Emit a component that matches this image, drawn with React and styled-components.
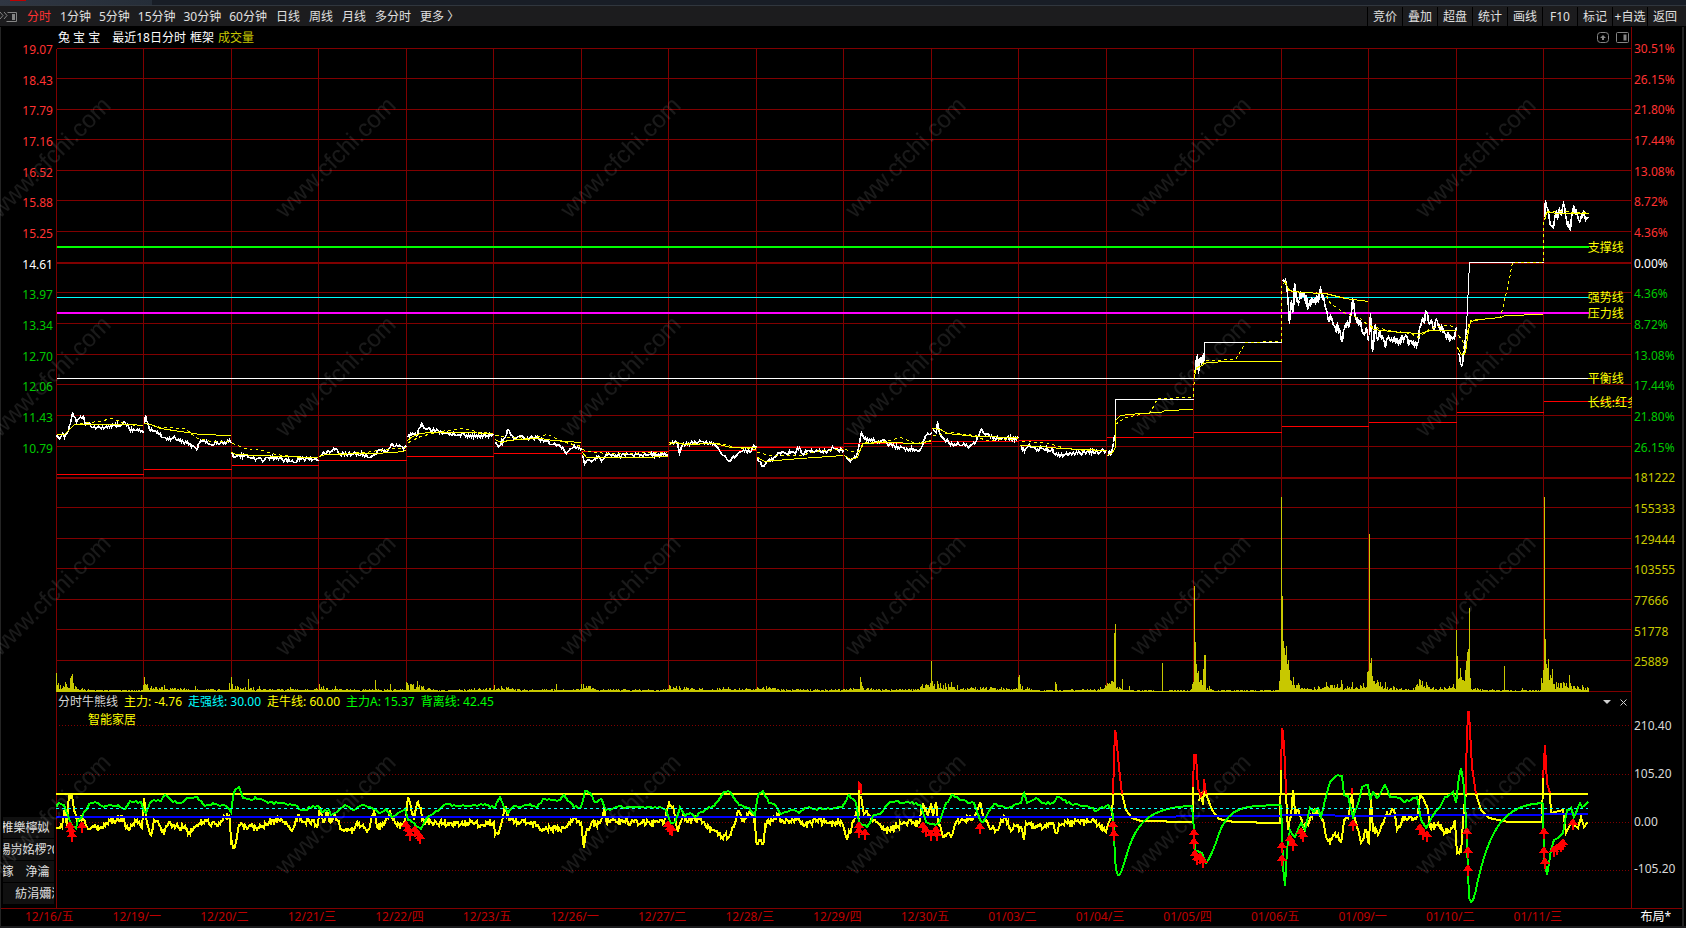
import React from 'react'
import styled, { createGlobalStyle } from 'styled-components'

const periods = ['1分钟', '5分钟', '15分钟', '30分钟', '60分钟']
const longPeriods = ['日线', '周线', '月线', '多分时']
const tools = ['竞价', '叠加', '超盘', '统计', '画线', 'F10', '标记', '+自选', '返回']

const prices = ['19.07', '18.43', '17.79', '17.16', '16.52', '15.88', '15.25', '14.61', '13.97', '13.34', '12.70', '12.06', '11.43', '10.79']
const percents = ['30.51%', '26.15%', '21.80%', '17.44%', '13.08%', '8.72%', '4.36%', '0.00%', '4.36%', '8.72%', '13.08%', '17.44%', '21.80%', '26.15%']
const volumes = ['181222', '155333', '129444', '103555', '77666', '51778', '25889']
const levels = ['210.40', '105.20', '0.00', '-105.20']
const days = ['12/16/五', '12/19/一', '12/20/二', '12/21/三', '12/22/四', '12/23/五', '12/26/一', '12/27/二', '12/28/三', '12/29/四', '12/30/五', '01/03/二', '01/04/三', '01/05/四', '01/06/五', '01/09/一', '01/10/二', '01/11/三']
const sideRows = ['椎樂檸姒  ', '楊岃姳椤?0', '鎵　浄瀹  ', ' ! 　紡涓嬭浇']

const legend = [
  ['分时牛熊线', '#d8d8d8'],
  ['主力: -4.76', '#ffff00'],
  ['走强线: 30.00', '#00ffff'],
  ['走牛线: 60.00', '#ffff00'],
  ['主力A: 15.37', '#00ff00'],
  ['背离线: 42.45', '#00ff00'],
]

const lineLabels = [
  ['支撑线', 30.9],
  ['强势线', 38.7],
  ['压力线', 41.1],
  ['平衡线', 51.2],
  ['长线:红多', 55],
]

const gridX = [56, 143, 231, 318, 406, 493, 581, 668, 756, 843, 931, 1018, 1106, 1193, 1281, 1368, 1456, 1543]
const gridY = [48, 78, 109, 139, 170, 200, 231, 292, 323, 354, 384, 415, 446, 507, 538, 568, 599, 629, 660]

// one line per trading day: x,y pairs in chart units
const priceDays = [
  '56,435 59,438 62,433 64,437 68,430 70,423 72,412 74,416 76,422 79,418 83,415 84,421 87,423 94,426 98,426 104,427 114,425 121,424 124,421 127,424 129,429 134,430 141,430 143,433',
  '144,423 145,415 147,422 150,430 157,431 162,437 166,439 175,438 183,442 189,443 196,449 198,443 203,440 207,443 216,443 223,443 229,439 231,442',
  '231,452 234,457 239,455 246,454 250,457 261,459 271,457 282,459 291,461 296,462 300,457 307,458 316,459 318,460',
  '319,455 323,452 330,451 336,448 339,453 346,454 357,453 371,456 379,449 387,451 391,443 395,446 406,447',
  '407,437 410,433 416,435 419,427 421,423 425,428 434,430 445,433 454,434 464,434 475,436 486,435 493,435',
  '495,442 499,445 504,438 507,429 511,435 516,438 521,435 525,439 536,437 543,441 554,443 560,446 565,452 572,448 577,446 581,448',
  '582,455 584,464 588,459 592,460 597,457 602,459 606,453 617,455 640,454 667,454',
  '669,443 677,443 679,453 682,445 694,441 704,443 713,443 717,447 722,455 729,461 735,456 740,451 751,450 754,446 756,446',
  '757,458 763,466 769,459 774,457 777,453 794,452 799,447 802,453 806,451 822,451 833,448 843,450',
  '845,457 850,461 856,455 859,443 861,432 863,437 872,440 885,441 892,446 904,448 919,450 922,445 925,435 931,432',
  '933,429 936,432 937,421 939,432 944,439 953,445 963,443 969,446 976,440 980,430 986,433 993,438 1018,438',
  '1020,445 1024,451 1028,445 1035,448 1051,449 1057,455 1072,453 1086,452 1105,451',
]
const livelyDays = [
  '1107,455 1111,451 1113,442 1115,438',
  '1195,370 1197,355 1198,373 1200,357 1203,363 1204,350',
  '1282,281 1285,279 1287,293 1289,323 1291,300 1293,310 1294,283 1296,300 1302,292 1308,305 1314,298 1318,302 1320,288 1324,302 1327,315 1333,325 1339,328 1341,341 1345,323 1349,325 1352,299 1355,317 1359,320 1363,333 1366,327 1368,341',
  '1369,335 1370,313 1372,351 1374,327 1378,338 1379,330 1385,347 1388,336 1395,343 1399,339 1413,340 1416,346 1420,326 1427,313 1430,322 1439,325 1445,333 1452,338 1456,327',
  '1458,353 1461,365 1464,350 1466,327',
  '1544,217 1545,200 1547,208 1549,220 1552,226 1555,213 1560,213 1563,203 1565,215 1569,228 1572,213 1574,207 1577,215 1580,220 1583,210 1585,220 1588,217',
]
const limitUp = [
  '1115,438 1115,399 1193,399',
  '1204,350 1204,342 1281,342',
  '1466,327 1469,262 1543,262',
]
const averages = [
  '56,434 64,434 70,428 74,424 130,424 143,425',
  '144,423 150,424 160,428 180,431 200,434 231,435',
  '231,452 236,454 280,456 318,457',
  '319,456 325,454 370,453 395,452 406,450',
  '407,440 412,436 420,433 430,432 460,432 493,433',
  '495,439 500,442 508,440 520,439 540,438 552,440 581,442',
  '582,452 586,457 600,457 640,457 668,456',
  '669,444 676,442 684,444 715,443 730,447 756,447',
  '757,457 764,461 775,460 800,458 843,455',
  '844,455 850,459 857,457 862,443 885,442 919,443 931,440',
  '932,428 940,429 947,433 975,436 1018,437',
  '1020,445 1040,446 1060,448 1106,450',
  '1107,455 1112,452 1115,447 1115,420 1120,415 1140,413 1160,412 1165,410 1193,409',
  '1194,376 1196,367 1200,366 1206,362 1230,361 1281,361',
  '1282,284 1285,281 1288,290 1300,292 1325,293 1345,298 1368,301',
  '1370,325 1373,329 1400,332 1420,333 1430,330 1456,330',
  '1457,347 1461,354 1465,352 1468,330 1470,321 1480,319 1500,317 1505,315 1543,314',
  '1544,220 1546,212 1560,213 1588,213',
]
const dashes = [
  '74,424 98,421 112,418 124,423 135,425',
  '146,423 160,427 185,428 195,437 210,441 231,441',
  '232,443 245,448 262,450 275,454 300,457 318,457',
  '320,455 340,453 365,452 385,449 406,447',
  '408,442 420,436 440,431 462,428 480,432 493,433',
  '495,435 510,437 530,438 547,434 565,442 581,446',
  '582,449 592,452 610,453 667,452',
  '669,442 690,443 720,443 735,447 756,449',
  '757,452 770,455 800,455 820,450 843,449',
  '845,449 856,452 865,442 885,441 900,437 915,443 931,441',
  '933,435 950,432 975,435 985,440 1010,439 1018,438',
  '1022,441 1045,442 1065,448 1085,450 1106,450',
  '1115,424 1125,417 1150,412 1157,398 1193,397 1194,370 1206,360 1235,359 1245,342 1281,341 1281,285',
  '1285,282 1290,291 1325,293 1330,303 1345,313 1360,318 1368,325',
  '1370,326 1390,330 1410,333 1418,337 1430,328 1445,325 1456,326',
  '1458,335 1463,342 1464,354 1468,325 1470,320 1500,317 1508,283 1512,262 1543,262 1543,218',
  '1547,211 1588,212',
]
const longLine = [474, 469, 465, 460, 456, 453, 451, 450, 447, 443, 441, 440, 437, 432, 426, 422, 412, 401]

// x,top of the volume bars that rise over the noise
const spikes = '56,672 57,684 60,684 65,681 66,683 70,677 71,675 72,673 73,682 76,686 144,676 145,683 146,684 148,687 151,686 164,684 195,685 229,682 231,676 232,683 235,685 248,678 253,686 259,685 290,686 319,683 323,685 335,685 375,679 390,683 406,681 407,682 408,684 411,684 413,685 417,680 419,684 421,685 494,684 501,685 556,683 581,683 583,683 588,685 669,684 673,686 860,676 861,681 862,685 925,684 927,685 930,682 931,660 932,680 934,683 937,680 943,684 951,681 1018,676 1019,674 1020,683 1022,685 1055,681 1056,683 1109,686 1112,682 1113,681 1114,632 1115,623 1122,678 1129,685 1162,662 1194,585 1195,641 1196,663 1197,672 1198,676 1199,681 1200,679 1202,684 1203,668 1204,654 1205,654 1209,685 1281,496 1282,595 1283,640 1284,673 1285,669 1286,645 1287,663 1288,659 1289,669 1290,680 1292,684 1293,676 1294,684 1326,681 1332,684 1334,684 1341,679 1342,683 1352,681 1367,671 1369,533 1370,662 1371,657 1372,675 1373,680 1374,680 1375,683 1376,682 1385,681 1416,684 1419,678 1420,679 1422,680 1426,681 1456,629 1457,655 1458,678 1459,677 1460,667 1461,676 1462,679 1463,680 1465,672 1466,667 1467,651 1468,648 1469,607 1470,684 1504,665 1522,687 1544,496 1545,638 1546,663 1547,667 1548,658 1549,679 1550,680 1551,677 1552,668 1553,683 1556,681 1558,684 1560,682 1563,684 1566,682 1569,674 1570,682 1582,684 1587,686'

// x,height of the volume noise
const volumeFloor = '56,8 60,6 75,5 85,2 140,1 145,8 155,4 200,2 230,2 235,5 260,2 310,2 325,4 350,2 405,2 412,10 425,4 440,1 490,3 505,4 520,2 575,2 585,7 595,2 660,2 675,6 690,3 715,2 725,5 735,2 750,5 765,5 780,2 840,2 858,5 875,2 915,2 923,7 950,8 965,4 1000,4 1012,2 1017,5 1025,4 1040,1 1095,2 1112,10 1120,3 1135,1 1190,1 1196,24 1206,6 1212,1 1278,1 1283,50 1289,25 1295,9 1310,3 1320,5 1335,7 1345,6 1355,4 1365,8 1369,30 1375,14 1385,6 1400,3 1412,2 1418,12 1425,7 1435,3 1450,5 1455,10 1462,15 1469,45 1471,4 1480,2 1500,1 1540,1 1544,50 1550,15 1556,8 1570,8 1580,4 1588,5'

const strongYellow = [
  '56,828 62,827 65,807 67,827 69,795 72,796 74,810 77,822 81,815 87,827 95,825 102,828 107,823 123,817 125,825 129,830 136,822 142,828 144,798 146,817 149,830 151,835 154,820 159,825 162,833 165,830 169,822 173,825 184,828 189,832 195,827 200,824 205,820 210,825 219,823 227,815 230,820 231,843 234,848 237,837 239,825 246,827 253,826 259,828 266,825 275,820 286,822 291,830 299,815 302,822 309,820 318,825 320,807 323,822 327,812 330,822 335,812 336,820 343,830 354,830 357,822 368,830 374,812 377,827 384,825 390,810 393,820 400,827 406,817 408,797 411,807 414,820 417,803 421,808 422,820 429,823 443,823 461,824 471,822 482,825 494,822 495,835 499,833 502,820 505,807 509,820 521,822 532,823 541,830 550,828 560,830 565,828 576,818 581,823 584,848 586,833 589,830 592,822 596,825 600,823 604,810 606,820 614,820 631,822 664,823 669,803 674,810 678,832 683,815 687,822 696,817 703,822 712,830 722,837 730,835 735,822 739,811 742,822 751,813 755,820 756,842 764,842 765,825 778,815 781,822 796,820 805,825 817,820 828,823 842,823 846,837 850,833 856,813 859,820 859,790',
  '861,796 863,810 868,815 871,820 881,827 889,830 903,823 914,823 919,823 923,803 928,815 931,803 933,817 936,802 938,822 944,837 953,833 956,822 963,820 974,817 980,803 984,817 989,827 996,830 1005,817 1010,828 1021,827 1024,840 1026,823 1035,828 1053,823 1056,833 1060,825 1071,822 1092,820 1106,832 1112,817 1113,794',
  '1122,794 1126,810 1132,818 1141,821 1193,822 1193,787',
  '1199,801 1201,792 1203,805 1204,790',
  '1206,794 1212,810 1219,819 1234,822 1280,823 1281,770',
  '1286,794 1288,830 1291,817 1293,790 1295,813 1298,810 1303,827 1309,822 1314,810 1318,813 1323,820 1326,837 1330,843 1335,833 1341,843 1344,820 1348,818 1352,794 1355,820 1361,843 1366,830 1369,843 1371,797 1373,830 1379,833 1385,817 1394,810 1397,830 1405,817 1417,817 1420,795 1424,800 1428,810 1430,827 1438,823 1445,833 1452,828 1455,820 1457,853 1461,853 1464,810 1466,794',
]
const calmYellow = ['1476,794 1481,810 1489,818 1508,822 1542,822 1543,778', '1550,794 1551,813 1563,810 1566,833 1571,823 1578,828 1581,817 1584,827 1587,823 1588,823']
const redPeaks = [
  '859,790 859,783 861,785 861,794',
  '1113,794 1115,730 1116,734 1119,767 1122,794',
  '1193,787 1194,755 1196,755 1198,788 1201,796 1204,790 1204,779 1206,794',
  '1281,770 1282,728 1283,732 1285,763 1286,794',
  '1352,794 1352,788',
  '1466,794 1466,767 1468,712 1469,712 1472,767 1476,794',
  '1543,778 1545,745 1547,783 1550,793',
]
const green = [
  '56,807 59,803 64,805 67,813 70,822 73,827 76,828 78,820 82,817 89,804 98,803 105,806 118,805 125,809 130,801 141,802 144,811 146,813 150,803 154,800 161,801 165,795 171,800 179,803 189,798 197,797 205,806 214,804 227,807 231,812 234,792 236,789 239,787 243,798 252,800 255,797 268,803 280,803 295,805 301,810 318,806 323,812 329,810 331,815 337,812 345,805 354,810 362,805 373,809 380,813 386,809 392,817 405,809 408,820 414,823 421,829 427,818 434,813 446,804 461,806 486,805 495,807 500,797 504,807 508,813 514,806 521,807 530,804 537,807 543,799 560,800 564,795 574,807 581,807 585,791 590,793 595,802 602,800 606,810 617,807 660,807 666,810 671,823 675,822 680,807 685,816 690,813 695,817 701,812 714,806 724,792 730,792 739,805 746,807 749,808 755,815 758,795 763,791 769,803 774,804 781,814 792,810 799,813 805,808 822,809 842,807 849,795 856,803 859,822 867,827 874,815 881,813 890,802 912,802 921,806 926,822 935,825 939,823 946,803 953,795 960,800 974,803 980,820 983,822 987,815 994,804 1008,808 1021,803 1024,793 1027,803 1036,798 1042,803 1053,803 1057,797 1071,804 1089,807 1096,811 1108,805 1113,813',
  '1281,805 1282,830 1283,867 1285,886 1287,850 1290,830 1295,837 1301,823 1305,830 1310,808 1314,812 1318,808 1321,817 1326,797 1330,782 1336,776 1342,776 1344,795 1348,796 1353,817 1357,807 1362,787 1368,785 1370,800 1373,792 1377,798 1385,785 1390,797 1400,798 1405,802 1417,797 1421,820 1426,828 1432,817 1440,807 1445,797 1453,792 1456,803 1459,777 1461,768 1464,787 1466,820 1469,897',
  '1543,803 1544,857 1547,875 1551,850 1554,840 1563,833 1567,810 1571,808 1574,817 1580,803 1582,807 1588,802',
]
const greenCurves = [
  'M1113,813 L1115,857 Q1116,876 1119,875 Q1121,874 1126,857 C1135,827 1145,807 1192,806 L1194,830 1195,850 1202,853 1206,863 Q1211,858 1220,831 C1230,806 1245,806 1281,805',
  'M1469,897 Q1472,912 1478,880 C1490,828 1505,804 1543,803',
]
const arrows = '70,821 71,825 72,830 82,821 406,820 408,824 410,829 415,825 418,829 420,832 668,820 670,823 672,824 859,821 859,826 865,828 923,821 926,825 931,829 936,825 937,829 980,822 1113,820 1114,829 1194,828 1194,837 1195,849 1197,853 1200,852 1203,856 1282,841 1282,854 1290,834 1293,839 1301,827 1303,830 1353,819 1420,823 1423,828 1427,830 1467,827 1468,846 1468,864 1544,827 1544,846 1545,857 1554,845 1557,843 1561,840 1563,838 1573,818'

const parse = text => text.split(' ').map(pair => pair.split(',').map(Number))

const random = seed => {
  let s = seed * 7919 + 17
  return () => {
    s = (s * 16807) % 2147483647
    return s / 2147483647
  }
}

const heightAt = (points, x) => {
  const i = points.findIndex(p => p[0] >= x)
  if (i <= 0) return points[i === 0 ? 0 : points.length - 1][1]
  const [x0, y0] = points[i - 1]
  const [x1, y1] = points[i]
  return x1 === x0 ? y1 : y0 + ((y1 - y0) * (x - x0)) / (x1 - x0)
}

// joins the points and adds a little jitter on every step between them
const jagged = (text, amount, step = 1) => {
  const points = parse(text)
  const next = random(points[0][0])
  const out = []
  points.forEach(([x, y], i) => {
    out.push(`${x},${y}`)
    const after = points[i + 1]
    if (!after) return
    for (let px = x + step; px < after[0]; px += step) {
      out.push(`${px},${Math.round(heightAt(points, px) + (next() - 0.5) * 2 * amount)}`)
    }
  })
  return out.join(' ')
}

const volumePath = () => {
  const floor = parse(volumeFloor)
  const next = random(5)
  let d = ''
  for (let x = 56; x < 1589; x += 1) {
    const h = Math.round(heightAt(floor, x) * (0.35 + next() * 0.75) * (next() > 0.4 ? 1 : 0.5))
    d += `M${x},691V${690 - h}`
  }
  parse(spikes).forEach(([x, y]) => {
    d += `M${x},691V${y}`
  })
  return d
}

const PriceChart = () => (
  <Plot viewBox="56 48 1576 644" preserveAspectRatio="none" role="img" aria-label="最近18日分时">
    <g transform="translate(0.5 0.5)" fill="none" shapeRendering="crispEdges">
      <g stroke="#800000">
        {gridX.map(x => <path key={x} d={`M${x},48V691`} />)}
        {gridY.map(y => <path key={y} d={`M56,${y}H1632`} />)}
        <path d="M56,691H1632M1631,48V692" />
        <path d="M56,262.5H1632M56,477.5H1632" strokeWidth="2" />
      </g>
      <path d={volumePath()} stroke="#c8c800" />
      <path d="M56,246.5H1588" stroke="#00ff00" strokeWidth="2" />
      <path d="M56,297H1588" stroke="#00ffff" />
      <path d="M56,312.5H1588" stroke="#ff00ff" strokeWidth="2" />
      <path d="M56,378H1588" stroke="#ffffff" />
      <g stroke="#ff0000">
        {longLine.map((y, i) => <path key={i} d={`M${gridX[i]},${y}H${gridX[i + 1] || 1632}`} />)}
      </g>
      <g stroke="#ffffff">
        <g strokeWidth="1.6">
          {priceDays.map(d => <polyline key={d} points={jagged(d, 2)} />)}
          {livelyDays.map(d => <polyline key={d} points={jagged(d, 6)} />)}
        </g>
        {limitUp.map(d => <polyline key={d} points={d} />)}
      </g>
      <g stroke="#ffff00">
        {averages.map(d => <polyline key={d} points={d} />)}
        {dashes.map(d => <polyline key={d} points={d} strokeDasharray="3 3" />)}
      </g>
    </g>
  </Plot>
)

const BullBearChart = () => (
  <Plot viewBox="56 692 1576 216" preserveAspectRatio="none" role="img" aria-label="分时牛熊线">
    <g fill="none" shapeRendering="crispEdges">
      <path d="M59,725.5H1631M59,774.5H1631M59,822.5H1631M59,870.5H1631" stroke="#800000" strokeDasharray="1 2" />
      <path d="M56.5,692V908M1631.5,692V908" stroke="#800000" />
      <g strokeWidth="2">
        <path d="M56,794H1588" stroke="#ffff00" />
        <g stroke="#ffff00">
          {strongYellow.map(d => <polyline key={d} points={jagged(d, d.length > 90 ? 3 : 0)} />)}
          {calmYellow.map(d => <polyline key={d} points={d} />)}
        </g>
        <g stroke="#ff0000">
          {redPeaks.map(d => <polyline key={d} points={d} />)}
        </g>
        <path d="M56,817H1160L1193,816H1281V815H1330L1340,816H1368L1420,815H1543V814H1588" stroke="#0000ff" />
        <g stroke="#00ff00">
          {green.map(d => <polyline key={d} points={jagged(d, 1, 2)} />)}
          {greenCurves.map(d => <path key={d} d={d} />)}
        </g>
      </g>
      <path d="M56,808.5H1588" stroke="#00ffff" strokeDasharray="3 3" />
      {parse(arrows).map(([x, y]) => (
        <path key={`${x}-${y}`} d={`M${x},${y}l5,7h-4v5h-2v-5h-4z`} fill="#ff0000" />
      ))}
    </g>
  </Plot>
)

const PanelIcon = () => (
  <svg width="13" height="13" viewBox="0 0 13 13" fill="none" stroke="#858585" aria-hidden="true">
    <rect x="0.5" y="1.5" width="12" height="10" rx="1" />
    <path d="M9 3.5v6" strokeWidth="3" />
  </svg>
)

const App = () => (
  <>
    <GlobalStyle />
    <Screen>
      <TitleStrip><TitleMark /></TitleStrip>
      <Toolbar>
        <SideToggle aria-label="侧栏">
          <svg width="18" height="14" viewBox="0 0 18 14" fill="none" stroke="#858585" aria-hidden="true">
            <path d="M7.5 2.5h9v9h-10" />
            <path d="M13.5 4v6" strokeWidth="3" />
            <path d="M0 2l3 3.500-3 3.500M4 2l3 3.500-3 3.500" />
          </svg>
        </SideToggle>
        <Period $active>分时</Period>
        <Minutes>
          {periods.map(p => <Period key={p}>{p}</Period>)}
        </Minutes>
        {longPeriods.map(p => <Period key={p}>{p}</Period>)}
        <More>更多 〉</More>
        <Tools>
          {tools.map(t => <Tool key={t}>{t}</Tool>)}
        </Tools>
      </Toolbar>

      <Board>
        <Axis $left $top={14} $bottom={7}>
          {prices.map((p, i) => (
            <Tick key={p} $color={i < 7 ? '#ff3232' : i === 7 ? '#ffffff' : '#00c800'}>{p}</Tick>
          ))}
          {volumes.map(v => <Tick key={v} />)}
        </Axis>
        <MainPanel>
          <PanelHead>
            <Name>兔 宝 宝</Name>
            <span>最近18日分时</span>
            <span>框架</span>
            <VolumeName>成交量</VolumeName>
            <HeadIcons>
              <IconButton aria-label="展开">
                <svg width="13" height="13" viewBox="0 0 13 13" fill="none" stroke="#858585" aria-hidden="true">
                  <rect x="0.5" y="1.500" width="11" height="10" rx="3" />
                  <path d="M6 4L3 7h6zM5 7h2v2H5z" fill="#858585" stroke="none" />
                </svg>
              </IconButton>
              <IconButton aria-label="面板"><PanelIcon /></IconButton>
            </HeadIcons>
          </PanelHead>
          <PlotArea>
            <PriceChart />
            {lineLabels.map(([text, top]) => <LineLabel key={text} $top={top}>{text}</LineLabel>)}
          </PlotArea>
        </MainPanel>
        <Axis $top={13} $bottom={8}>
          {percents.map((p, i) => (
            <Tick key={i} $color={i < 7 ? '#ff3232' : i === 7 ? '#ffffff' : '#00c800'}>{p}</Tick>
          ))}
          {volumes.map(v => <Tick key={v} $color="#c8c800">{v}</Tick>)}
        </Axis>

        <SideList>
          {sideRows.map(row => <SideRow key={row}>{row}</SideRow>)}
        </SideList>
        <LowerPanel>
          <BullBearChart />
          <Legend>
            <LegendRow>
              {legend.map(([text, color]) => <LegendItem key={text} $color={color}>{text}</LegendItem>)}
              <LegendTools>
                <IconButton aria-label="菜单">
                  <svg width="9" height="9" viewBox="0 0 9 9" aria-hidden="true"><path d="M0 2h8L4 6z" fill="#d0d0d0" /></svg>
                </IconButton>
                <IconButton aria-label="关闭">
                  <svg width="7" height="7" viewBox="0 0 7 7" aria-hidden="true"><path d="M0.500 0.500l6 6m0-6l-6 6" stroke="#d0d0d0" /></svg>
                </IconButton>
              </LegendTools>
            </LegendRow>
            <Sector>智能家居</Sector>
          </Legend>
        </LowerPanel>
        <Axis $top={25} $bottom={0}>
          {levels.map(l => <Tick key={l} $color="#d8d8d8">{l}</Tick>)}
        </Axis>
      </Board>

      <DateBar>
        <Dates>
          {days.map(d => <Day key={d}>{d}</Day>)}
        </Dates>
        <Layout>布局*</Layout>
      </DateBar>
      <FootStrip />
      <Watermark aria-hidden="true">
        <defs>
          <pattern id="mark" x="-22" y="86" width="285" height="219" patternUnits="userSpaceOnUse">
            <text x="22" y="133" transform="rotate(-45 22 133)">www.cfchi.com</text>
          </pattern>
        </defs>
        <rect width="100%" height="100%" fill="url(#mark)" />
      </Watermark>
    </Screen>
  </>
)

export default App

const GlobalStyle = createGlobalStyle`
  body {
    margin: 0;
    background: #000;
    color: #fff;
    font-family: 'Noto Sans', 'Noto Sans CJK SC', sans-serif;
    font-size: 12px;
    line-height: 18px;
  }
  * {
    box-sizing: border-box;
  }
  button {
    padding: 0;
    border: 0;
    background: none;
    color: inherit;
    font: inherit;
    white-space: nowrap;
    cursor: pointer;
  }
`

const Screen = styled.div`
  position: relative;
  display: flex;
  flex-direction: column;
  height: 100vh;
  min-height: 640px;
  overflow: hidden;
`

const TitleStrip = styled.div`
  flex: none;
  height: 6px;
  padding-left: 10px;
  background: linear-gradient(90deg, #303743, #252d38 9%, #181d26 9%);
  border-bottom: 1px solid #30363e;
`

const TitleMark = styled.div`
  width: 16px;
  height: 1px;
  background: #c00000;
`

const Toolbar = styled.nav`
  display: flex;
  flex: none;
  align-items: center;
  gap: 9px;
  height: 21px;
  padding-top: 2px;
  background: #1c1c1e;
  border-bottom: 1px solid #000;
  color: #e0e0e0;
`

const SideToggle = styled.button`
  display: flex;
  width: 18px;
`

const Minutes = styled.div`
  display: flex;
  gap: 8px;
`

const Period = styled.button`
  color: ${props => (props.$active ? '#ff3232' : '#e0e0e0')};
`

const More = styled.button`
  color: #e0e0e0;
`

const Tools = styled.div`
  display: flex;
  margin-left: auto;
  padding-right: 4px;
`

const Tool = styled.button`
  width: 35px;
  height: 20px;
  border-left: 1px solid #000;
`

const Board = styled.main`
  display: grid;
  flex: 1;
  grid-template-columns: 55px minmax(0, 1fr) 50px;
  grid-template-rows: minmax(0, 665fr) minmax(0, 216fr);
  min-height: 0;
  margin-right: 2px;
  border: solid #242424;
  border-width: 0 2px 0 1px;
`

const Axis = styled.div`
  display: flex;
  flex-direction: column;
  min-height: 0;
  padding: ${props => props.$top}px ${props => (props.$left ? 3 : 2)}px ${props => props.$bottom}px;
  text-align: ${props => (props.$left ? 'right' : 'left')};
`

const Tick = styled.span`
  flex: 1;
  min-height: 0;
  color: ${props => props.$color};
`

const MainPanel = styled.section`
  display: flex;
  flex-direction: column;
  min-height: 0;
`

const PanelHead = styled.header`
  display: flex;
  flex: none;
  align-items: center;
  gap: 4px;
  height: 21px;
  padding: 0 2px;
  border-right: 1px solid #800000;
`

const Name = styled.span`
  margin-right: 8px;
`

const VolumeName = styled.span`
  color: #c8c800;
`

const HeadIcons = styled.div`
  display: flex;
  gap: 6px;
  margin-left: auto;
`

const IconButton = styled.button`
  display: flex;
  align-items: center;
`

const PlotArea = styled.div`
  position: relative;
  flex: 1;
  min-height: 0;
  overflow: hidden;
`

const Plot = styled.svg`
  display: block;
  grid-area: 1 / 1;
  width: 100%;
  height: 100%;
  min-height: 0;
`

const LineLabel = styled.span`
  position: absolute;
  left: 97.2%;
  top: ${props => props.$top}%;
  margin-top: -8px;
  color: #ffff00;
  white-space: nowrap;
`

const SideList = styled.div`
  display: flex;
  flex-direction: column;
  justify-content: flex-end;
  gap: 1px;
  min-height: 0;
  padding: 0 2px 4px;
`

const SideRow = styled.div`
  display: flex;
  justify-content: center;
  height: 21px;
  overflow: hidden;
  background: #101010;
  color: #e0e0e0;
  line-height: 21px;
  white-space: pre;
`

const LowerPanel = styled.section`
  display: grid;
  grid-template-rows: minmax(0, 1fr);
  min-height: 0;
`

const Legend = styled.div`
  grid-area: 1 / 1;
  padding: 1px 5px 0 2px;
`

const LegendRow = styled.div`
  display: flex;
  align-items: center;
  gap: 6px;
`

const LegendItem = styled.span`
  color: ${props => props.$color};
`

const LegendTools = styled.div`
  display: flex;
  gap: 8px;
  margin-left: auto;
`

const Sector = styled.div`
  padding-left: 30px;
  color: #ffff00;
`

const DateBar = styled.footer`
  display: flex;
  flex: none;
  height: 18px;
  margin-right: 2px;
  padding-left: 24px;
  border: solid #242424;
  border-width: 0 2px 0 1px;
  box-shadow: inset 0 1px #800000;
`

const Dates = styled.div`
  display: flex;
  flex: 1;
  color: #c00000;
`

const Day = styled.span`
  flex: 1;
  min-width: 0;
  white-space: nowrap;
`

const Layout = styled.button`
  width: 81px;
  padding-right: 11px;
  text-align: right;
`

const FootStrip = styled.div`
  flex: none;
  height: 2px;
  background: #1c1c1e;
`

const Watermark = styled.svg`
  position: absolute;
  inset: 0;
  width: 100%;
  height: 100%;
  pointer-events: none;
  text {
    font-family: 'Liberation Sans', sans-serif;
    font-size: 24px;
    fill: #fff;
    fill-opacity: 0.1;
  }
`
